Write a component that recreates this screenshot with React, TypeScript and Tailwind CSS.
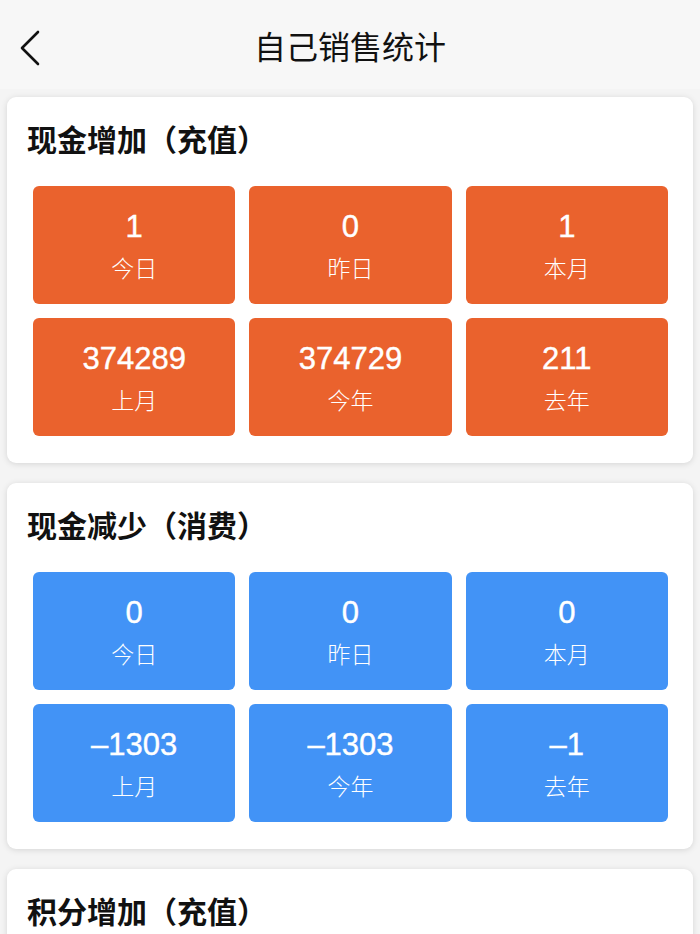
import * as React from "react";

type Stat = { value: string; label: string };

const SECTIONS: { title: string; color: "orange" | "blue"; stats: Stat[] }[] = [
  {
    title: "现金增加（充值）",
    color: "orange",
    stats: [
      { value: "1", label: "今日" },
      { value: "0", label: "昨日" },
      { value: "1", label: "本月" },
      { value: "374289", label: "上月" },
      { value: "374729", label: "今年" },
      { value: "211", label: "去年" },
    ],
  },
  {
    title: "现金减少（消费）",
    color: "blue",
    stats: [
      { value: "0", label: "今日" },
      { value: "0", label: "昨日" },
      { value: "0", label: "本月" },
      { value: "–1303", label: "上月" },
      { value: "–1303", label: "今年" },
      { value: "–1", label: "去年" },
    ],
  },
  {
    title: "积分增加（充值）",
    color: "orange",
    stats: [
      { value: "0", label: "今日" },
      { value: "0", label: "昨日" },
      { value: "0", label: "本月" },
      { value: "0", label: "上月" },
      { value: "0", label: "今年" },
      { value: "0", label: "去年" },
    ],
  },
];

const FONT = "font-['Liberation_Sans','Noto_Sans_CJK_SC',sans-serif]";

function Header() {
  return (
    <div className="relative h-[89px] bg-[#f7f7f7] flex items-center justify-center">
      <button type="button" className="absolute left-[18px] top-[30px]" aria-label="返回">
        <svg width="24" height="36" viewBox="0 0 24 36" fill="none">
          <path d="M20 2 L4 18 L20 34" stroke="#111" strokeWidth="2.6" strokeLinecap="round" strokeLinejoin="round" />
        </svg>
      </button>
      <h1 className="text-[32px] leading-none text-[#111] font-['Noto_Sans_CJK_SC',sans-serif] font-normal pt-[1px]">
        自己销售统计
      </h1>
    </div>
  );
}

function Section({ title, color, stats }: (typeof SECTIONS)[number]) {
  return (
    <div className="bg-white rounded-[9px] shadow-[0_1px_6px_rgba(0,0,0,0.13)] pt-[26px] pb-[27px]">
      <h2 className="px-5 text-[30px] leading-[30px] font-semibold text-[#111] font-['Noto_Sans_CJK_SC',sans-serif] [text-spacing-trim:space-all]">
        {title}
      </h2>
      <div className="grid grid-cols-3 gap-[14px] pl-[26px] pr-[25px] mt-[33px]">
        {stats.map((s) => (
          <div
            key={s.label}
            className={`h-[118px] rounded-[6px] flex flex-col items-center justify-center gap-[7px] text-white ${
              color === "orange" ? "bg-[#ea622d]" : "bg-[#4293f6]"
            }`}
          >
            <span className={`${FONT} text-[31px] leading-[36px] [-webkit-text-stroke:0.4px_white]`}>{s.value}</span>
            <span className="font-['Noto_Sans_CJK_SC',sans-serif] text-[23px] leading-[30px] font-light">{s.label}</span>
          </div>
        ))}
      </div>
    </div>
  );
}

export default function App() {
  return (
    <div className="min-h-screen bg-[#f4f4f4] overflow-hidden">
      <Header />
      <div className="flex flex-col gap-5 px-[7px] pt-[8px] pb-6">
        {SECTIONS.map((s) => (
          <Section key={s.title} {...s} />
        ))}
      </div>
    </div>
  );
}
